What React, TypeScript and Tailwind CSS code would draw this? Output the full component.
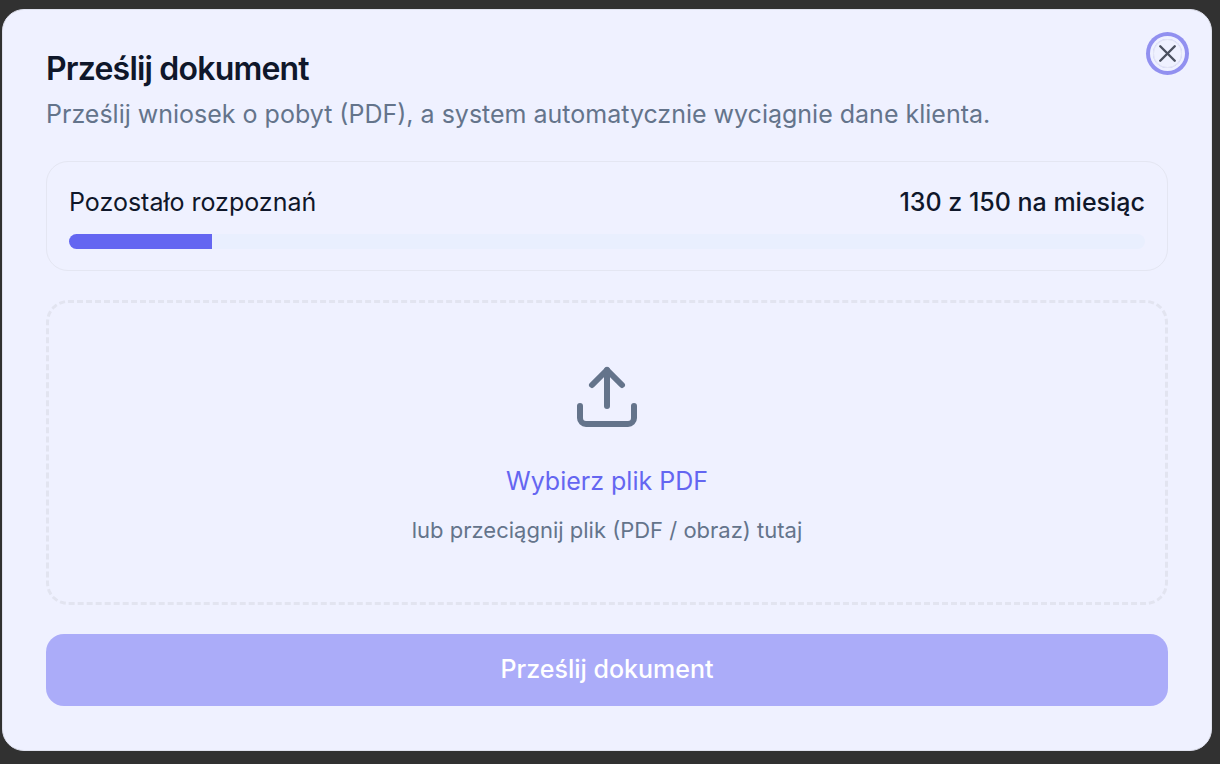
import { useState } from 'react'
import { Upload, X } from 'lucide-react'

interface QuotaProps {
  used: number
  limit: number
}

function Quota({ used, limit }: QuotaProps) {
  const percent = (used / limit) * 100

  return (
    <div className="rounded-[22px] border border-[#e4e6f2] px-[22px] pt-[22px] pb-[21px]">
      <div className="flex items-center justify-between text-[25px] leading-9 text-[#0f172a]">
        <span id="quota-label">Pozostało rozpoznań</span>
        <span className="font-medium">{limit - used} z {limit} na miesiąc</span>
      </div>
      <div
        role="progressbar"
        aria-labelledby="quota-label"
        aria-valuenow={used}
        aria-valuemin={0}
        aria-valuemax={limit}
        className="mt-[14px] h-[15px] overflow-hidden rounded-full bg-[#e9effe]"
      >
        <div className="h-full bg-[#6466f1]" style={{ width: `${percent}%` }} />
      </div>
    </div>
  )
}

export default function App() {
  const [open, setOpen] = useState(true)
  const [file, setFile] = useState<File | null>(null)

  const handleDrop = (e: React.DragEvent) => {
    e.preventDefault()
    setFile(e.dataTransfer.files[0] ?? null)
  }

  return (
    <div className="min-h-screen bg-[#313131] pt-[9px] pr-2 pb-[13px] pl-[2px] font-['Inter',sans-serif]">
      {open && (
        <div
          role="dialog"
          aria-labelledby="dialog-title"
          className="relative rounded-[22px] border border-[#dfe1ee] bg-[#eff1ff] px-[43px] pt-[37px] pb-11"
        >
          <h2 id="dialog-title" className="text-[32px] leading-[44px] font-semibold tracking-tight text-[#0f172a]">
            Prześlij dokument
          </h2>
          <p className="mt-[5px] text-[25px] leading-9 text-[#64748b]">
            Prześlij wniosek o pobyt (PDF), a system automatycznie wyciągnie dane klienta.
          </p>

          <form className="mt-[29px] flex flex-col gap-[29px]" onSubmit={(e) => e.preventDefault()}>
            <Quota used={20} limit={150} />

            {/* Drop zone */}
            <div
              onDragOver={(e) => e.preventDefault()}
              onDrop={handleDrop}
              className="flex flex-col items-center rounded-[22px] border-3 border-dashed border-[#e2e4f0] px-6 pt-[58px] pb-[54px]"
            >
              <Upload className="size-[72px] text-[#64748b]" />
              <label htmlFor="file" className="mt-[30px] cursor-pointer text-[25px] leading-9 text-[#6466f1]">
                Wybierz plik PDF
              </label>
              <input
                id="file"
                type="file"
                accept="application/pdf,image/*"
                className="sr-only"
                onChange={(e) => setFile(e.target.files?.[0] ?? null)}
              />
              <p className="mt-[13px] text-[22px] leading-9 text-[#64748b]">
                {file ? file.name : 'lub przeciągnij plik (PDF / obraz) tutaj'}
              </p>
            </div>

            <button
              type="submit"
              disabled={!file}
              className="h-[72px] rounded-[18px] bg-[#6466f1] text-[25px] font-medium text-white disabled:bg-[#abacf9]"
            >
              Prześlij dokument
            </button>
          </form>

          <button
            type="button"
            aria-label="Zamknij"
            onClick={() => setOpen(false)}
            className="absolute top-[29px] right-[29px] flex size-[29px] items-center justify-center rounded-full border border-[#e2e4f4] text-[#4b5160] ring-4 ring-[#9190f0] ring-offset-3 ring-offset-[#eff1ff]"
          >
            <X className="size-[29px] shrink-0" />
          </button>
        </div>
      )}
    </div>
  )
}
